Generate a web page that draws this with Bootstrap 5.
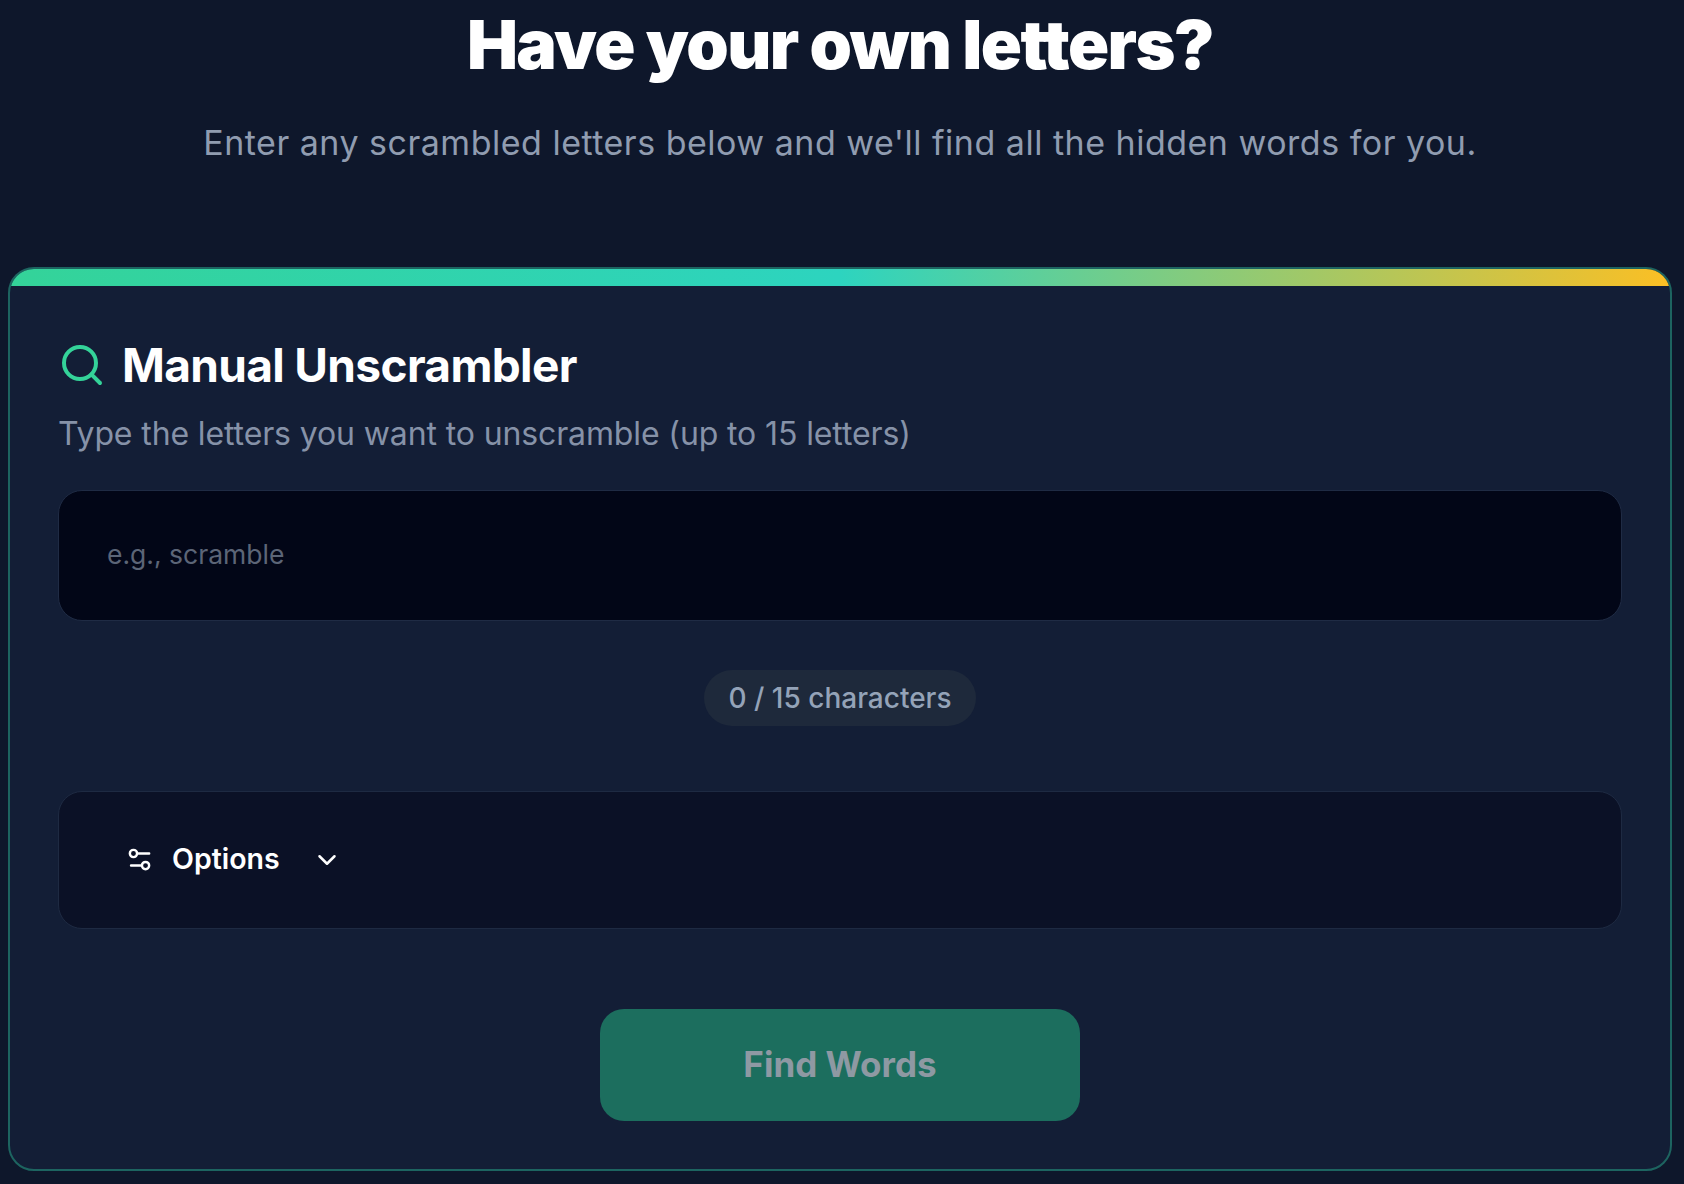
<!DOCTYPE html>
<html lang="en"><head><meta charset="utf-8"><title>Unscrambler</title>
<link href="https://cdn.jsdelivr.net/npm/bootstrap@5.3.0/dist/css/bootstrap.min.css" rel="stylesheet">
<style>
html,body{height:1184px;overflow:hidden}
body{background:#0e172b;font-family:"Inter","Noto Sans",sans-serif;color:#fff}
.page-wrap{padding:0 8px 0 8px;width:1680px}
.hero-title{font-family:"Inter",sans-serif;font-weight:900;font-size:68px;line-height:88px;margin:0;color:#fff;letter-spacing:-1.6px}
.hero-sub{font-size:34px;line-height:44px;color:#909cb0;margin:33px 0 0;letter-spacing:.5px}
.panel{margin-top:102px;background:#131e36;border:2px solid #1d6460;border-radius:26px;overflow:hidden;height:904px}
.rainbow{height:16.5px;background:linear-gradient(90deg,#34d399 0%,#2dd4bf 50%,#fbbf24 100%)}
.panel-body{padding:51px 48px 48px}
.panel-title{font-size:46px;font-weight:700;margin:0;line-height:56px;gap:16px;letter-spacing:-.65px}
.panel-desc{font-size:32px;line-height:42px;color:#8692a8;margin:20px 0 0;letter-spacing:-.12px}
.letters{height:131px;margin-top:35px;background:#020617;border:1.5px solid #1f2b44;border-radius:24px;padding:0 48px;font-size:26.5px;color:#5c6577}
.count-pill{margin-top:49px;height:56px;padding:0 24px;background:#1e293b;border-radius:28px;font-size:28px;font-weight:500;color:#94a3b8}
.opts{margin-top:65px;height:138px;background:#0b1126;border:1.5px solid #1e2a42;border-radius:24px;padding:0 66px;font-size:28.5px;font-weight:600;gap:18px}
.chev{margin-left:14px}
.btn.find,.btn.find:disabled{width:480px;height:112px;margin-top:80px;background:#1c6e5e;border:0;border-radius:24px;color:#8e99a3;font-size:35px;font-weight:700;opacity:1}
</style></head><body>
<div class="page-wrap">
<h1 class="hero-title text-center">Have your own letters?</h1>
<p class="hero-sub text-center">Enter any scrambled letters below and we'll find all the hidden words for you.</p>
<div class="panel">
<div class="rainbow"></div>
<div class="panel-body">
<h2 class="panel-title d-flex align-items-center"><svg width="48" height="48" viewBox="0 0 24 24" fill="none" stroke="#34d399" stroke-width="2" stroke-linecap="round" stroke-linejoin="round"><circle cx="11" cy="11" r="8"/><path d="m21 21-4.3-4.3"/></svg>Manual Unscrambler</h2>
<p class="panel-desc">Type the letters you want to unscramble (up to 15 letters)</p>
<div class="letters d-flex align-items-center">e.g., scramble</div>
<div class="d-flex justify-content-center"><div class="count-pill d-inline-flex align-items-center">0 / 15 characters</div></div>
<div class="opts d-flex align-items-center"><svg width="29" height="29" viewBox="0 0 24 24" fill="none" stroke="#fff" stroke-width="2" stroke-linecap="round" stroke-linejoin="round"><path d="M20 7h-9M14 17H5"/><circle cx="17" cy="17" r="3"/><circle cx="7" cy="7" r="3"/></svg><span>Options</span><svg class="chev" width="30" height="30" viewBox="0 0 24 24" fill="none" stroke="#fff" stroke-width="2" stroke-linecap="round" stroke-linejoin="round"><path d="m6 9 6 6 6-6"/></svg></div>
<div class="d-flex justify-content-center"><button class="find btn" type="button" disabled>Find Words</button></div>
</div></div></div>
<script src="https://cdn.jsdelivr.net/npm/bootstrap@5.3.0/dist/js/bootstrap.bundle.min.js"></script>
</body></html>
